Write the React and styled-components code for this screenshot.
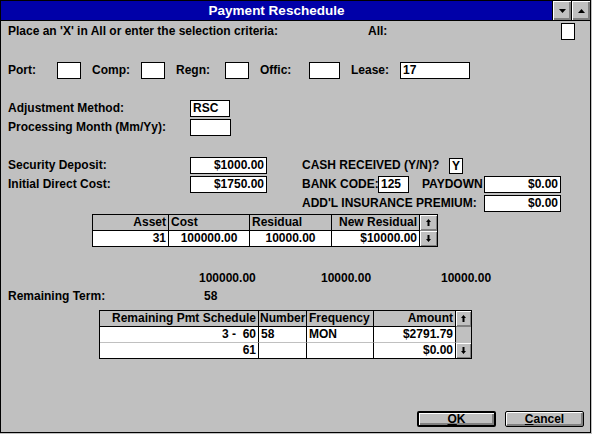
import React from 'react'
import styled, { createGlobalStyle } from 'styled-components'

const GlobalStyle = createGlobalStyle`
  html, body {
    margin: 0;
    padding: 0;
    background: #c0c0c0;
  }
  body {
    font-family: "Liberation Sans", Arial, sans-serif;
    font-size: 12px;
    font-weight: bold;
    color: #000;
  }
`

const Window = styled.div`
  width: 591px;
  height: 433px;
  box-sizing: border-box;
  border: 1px solid #000;
  background: #c0c0c0;
  display: flex;
  flex-direction: column;
`

const TitleBar = styled.div`
  height: 19px;
  flex: none;
  display: flex;
  border-bottom: 1px solid #000;
`

const Caption = styled.div`
  flex: 1;
  background: #0000a8;
  color: #fff;
  font-size: 13.5px;
  line-height: 19px;
  text-align: center;
`

const TitleButton = styled.div`
  width: 18px;
  border-left: 1px solid #000;
  background: #c0c0c0;
  box-shadow: inset 1px 1px #fff, inset -1px -1px #808080, inset -2px -2px #808080;
  display: flex;
  align-items: center;
  justify-content: center;
`

const Body = styled.div`
  flex: 1;
  display: flex;
  flex-direction: column;
  padding: 0 6px 5px 7px;
`

const Row = styled.div`
  display: flex;
  align-items: center;
  margin-top: ${p => p.$top || 0}px;
  margin-left: ${p => p.$left || 0}px;
  gap: ${p => p.$gap || 0}px;
`

const Label = styled.div`
  flex: none;
  width: ${p => (p.$w ? `${p.$w}px` : 'auto')};
  line-height: 17px;
  white-space: nowrap;
`

const Field = styled.div`
  flex: none;
  width: ${p => p.$w}px;
  height: ${p => p.$h || 17}px;
  box-sizing: border-box;
  border: 1px solid #000;
  background: #fff;
  padding: 0 2px;
  line-height: ${p => (p.$h || 17) - 2}px;
  text-align: ${p => p.$align || 'left'};
  margin-left: ${p => p.$ml || 0}px;
  margin-right: ${p => p.$mr || 0}px;
  white-space: nowrap;
`

const Group = styled.div`
  display: flex;
  align-items: center;
`

const Section = styled.div`
  display: flex;
  margin-top: ${p => p.$top}px;
`

const Column = styled.div`
  display: flex;
  flex-direction: column;
  gap: 2px;
  width: ${p => (p.$w ? `${p.$w}px` : 'auto')};
`

const Table = styled.div`
  display: grid;
  grid-template-columns: ${p => p.$cols};
  align-self: flex-start;
  border: 1px solid #000;
  background: #fff;
  margin-top: ${p => p.$top}px;
  margin-left: ${p => p.$left}px;
`

const Cell = styled.div`
  height: ${p => (p.$head ? 16 : p.$sep ? 16 : 15)}px;
  box-sizing: border-box;
  line-height: 15px;
  padding: 0 2px;
  white-space: nowrap;
  overflow: hidden;
  text-align: ${p => p.$align || 'left'};
  background: ${p => (p.$head || p.$gray ? '#c0c0c0' : '#fff')};
  border-right: ${p => (p.$last ? 'none' : '1px solid #000')};
  border-bottom: ${p => (p.$head ? '1px solid #000' : p.$sep ? '1px solid #c0c0c0' : 'none')};
`

const ScrollCell = styled.div`
  height: ${p => p.$h}px;
  box-sizing: border-box;
  background: #c0c0c0;
  border-bottom: ${p => (p.$head ? '1px solid #808080' : 'none')};
  display: flex;
  align-items: center;
  justify-content: center;
  box-shadow: ${p => (p.$blank ? 'none' : 'inset 1px 1px #fff, inset -1px -1px #808080')};
`

const Totals = styled.div`
  display: flex;
  margin-top: 24px;
  margin-left: 191px;
  line-height: 15px;
`

const Amount = styled.div`
  width: ${p => (p.$w ? `${p.$w}px` : 'auto')};
`

const TermRow = styled.div`
  display: flex;
  margin-top: 3px;
  line-height: 15px;
`

const Footer = styled.div`
  margin-top: auto;
  display: flex;
  justify-content: flex-end;
  gap: 9px;
`

const Button = styled.div`
  width: 79px;
  height: 16px;
  box-sizing: border-box;
  border: ${p => (p.$default ? 2 : 1)}px solid #000;
  border-radius: 2px;
  background: #c0c0c0;
  box-shadow: inset 1px 1px #fff, inset -1px -1px #808080, inset -2px -2px #808080;
  text-align: center;
  line-height: ${p => (p.$default ? 12 : 14)}px;
  font-size: 12px;

  u {
    text-decoration-thickness: 1px;
    text-underline-offset: 1px;
  }
`

const Triangle = ({ up }) => (
  <svg width="7" height="4" viewBox="0 0 7 4">
    <polygon points={up ? '3.5,0 7,4 0,4' : '0,0 7,0 3.5,4'} fill="#000" />
  </svg>
)

const Arrow = ({ up }) => (
  <svg width="5" height="7" viewBox="0 0 5 7">
    {up ? (
      <path d="M2.5 0 L5 3 L3.5 3 L3.5 7 L1.5 7 L1.5 3 L0 3 Z" fill="#000" />
    ) : (
      <path d="M2.5 7 L5 4 L3.5 4 L3.5 0 L1.5 0 L1.5 4 L0 4 Z" fill="#000" />
    )}
  </svg>
)

export default function App() {
  return (
    <>
      <GlobalStyle />
      <Window>
        <TitleBar>
          <Caption>Payment Reschedule</Caption>
          <TitleButton><Triangle /></TitleButton>
          <TitleButton><Triangle up /></TitleButton>
        </TitleBar>

        <Body>
          <Row $top={2}>
            <Label $w={360}>Place an 'X' in All or enter the selection criteria:</Label>
            <Label>All:</Label>
            <Field $w={14} style={{ marginLeft: 'auto' }} $mr={9} />
          </Row>

          <Row $top={22} $gap={11}>
            <Group><Label $w={49}>Port:</Label><Field $w={24} /></Group>
            <Group><Label $w={49}>Comp:</Label><Field $w={24} /></Group>
            <Group><Label $w={49}>Regn:</Label><Field $w={24} /></Group>
            <Group><Label $w={49}>Offic:</Label><Field $w={31} /></Group>
            <Group><Label $w={49}>Lease:</Label><Field $w={70}>17</Field></Group>
          </Row>

          <Row $top={21}>
            <Label $w={182}>Adjustment Method:</Label>
            <Field $w={40}>RSC</Field>
          </Row>
          <Row $top={2}>
            <Label $w={182}>Processing Month (Mm/Yy):</Label>
            <Field $w={41} />
          </Row>

          <Section $top={21}>
            <Column $w={294}>
              <Row>
                <Label $w={182}>Security Deposit:</Label>
                <Field $w={77} $align="right">$1000.00</Field>
              </Row>
              <Row>
                <Label $w={182}>Initial Direct Cost:</Label>
                <Field $w={77} $align="right">$1750.00</Field>
              </Row>
            </Column>
            <Column>
              <Row>
                <Label $w={147}>CASH RECEIVED (Y/N)?</Label>
                <Field $w={14} $h={16}>Y</Field>
              </Row>
              <Row>
                <Label $w={76}>BANK CODE:</Label>
                <Field $w={31} $mr={13}>125</Field>
                <Label $w={62}>PAYDOWN</Label>
                <Field $w={77} $align="right">$0.00</Field>
              </Row>
              <Row>
                <Label $w={182}>ADD'L INSURANCE PREMIUM:</Label>
                <Field $w={77} $align="right">$0.00</Field>
              </Row>
            </Column>
          </Section>

          <Table $cols="76px 81px 82px 88px 17px" $top={2} $left={84}>
            <Cell $head $align="right">Asset</Cell>
            <Cell $head>Cost</Cell>
            <Cell $head>Residual</Cell>
            <Cell $head $align="right">New Residual</Cell>
            <ScrollCell $h={16} $head><Arrow up /></ScrollCell>
            <Cell $align="right">31</Cell>
            <Cell $align="center">100000.00</Cell>
            <Cell $align="center">10000.00</Cell>
            <Cell $align="right">$10000.00</Cell>
            <ScrollCell $h={15}><Arrow /></ScrollCell>
          </Table>

          <Totals>
            <Amount $w={122}>100000.00</Amount>
            <Amount $w={120}>10000.00</Amount>
            <Amount>10000.00</Amount>
          </Totals>

          <TermRow>
            <Amount $w={196}>Remaining Term:</Amount>
            <Amount>58</Amount>
          </TermRow>

          <Table $cols="159px 48px 67px 82px 15px" $top={6} $left={91}>
            <Cell $head $align="right">Remaining Pmt Schedule</Cell>
            <Cell $head style={{ paddingLeft: 1 }}>Number</Cell>
            <Cell $head>Frequency</Cell>
            <Cell $head $align="right">Amount</Cell>
            <ScrollCell $h={16} $head><Arrow up /></ScrollCell>
            <Cell $sep $align="right">3 -&nbsp;&nbsp;60</Cell>
            <Cell $sep>58</Cell>
            <Cell $sep>MON</Cell>
            <Cell $sep $align="right">$2791.79</Cell>
            <ScrollCell $h={16} $blank />
            <Cell $align="right">61</Cell>
            <Cell />
            <Cell />
            <Cell $align="right">$0.00</Cell>
            <ScrollCell $h={15}><Arrow /></ScrollCell>
          </Table>

          <Footer>
            <Button $default><u>O</u>K</Button>
            <Button><u>C</u>ancel</Button>
          </Footer>
        </Body>
      </Window>
    </>
  )
}
